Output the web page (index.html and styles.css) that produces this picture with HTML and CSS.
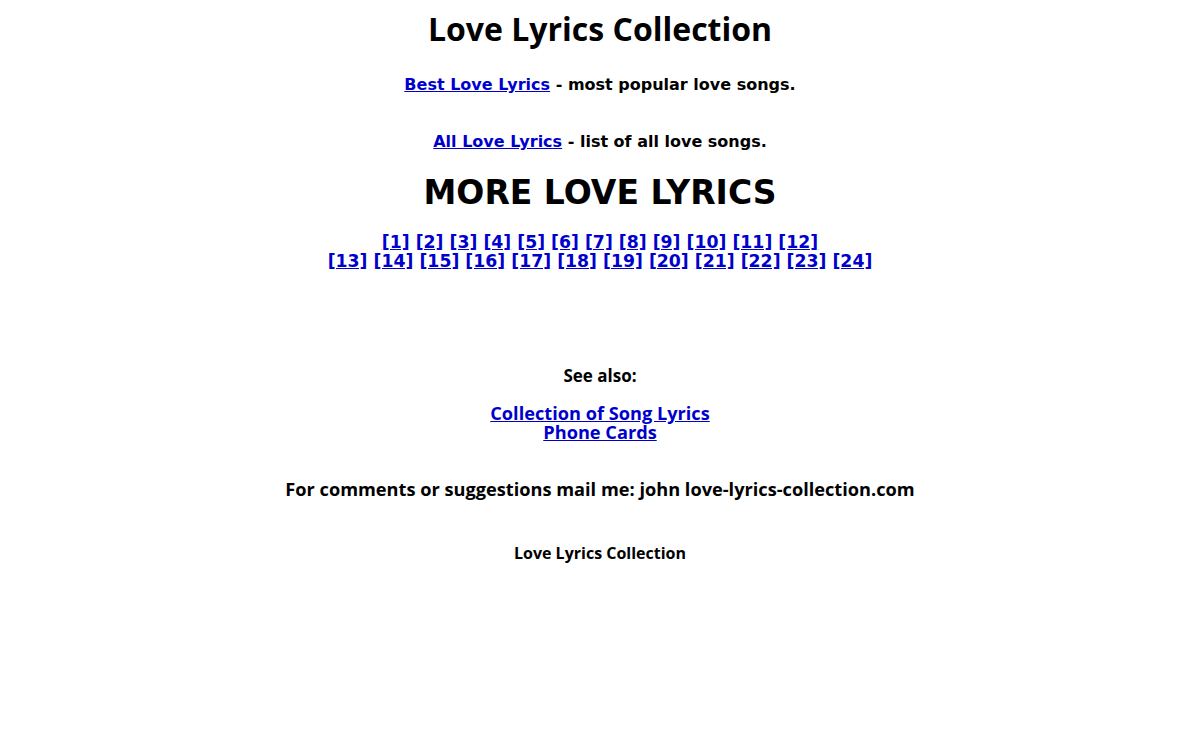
FILE: index.html
```html
<!DOCTYPE html>
<html>
<head>
<meta charset="utf-8">
<title>Love Lyrics Collection</title>
<link rel="stylesheet" href="styles.css">
</head>
<body>
<div class="page">
  <h1 class="title">Love Lyrics Collection</h1>
  <p class="intro"><a href="#">Best Love Lyrics</a> - most popular love songs.</p>
  <p class="intro second"><a href="#">All Love Lyrics</a> - list of all love songs.</p>
  <h2 class="more">MORE LOVE LYRICS</h2>
  <div class="pages">
    <a href="#">[1]</a> <a href="#">[2]</a> <a href="#">[3]</a> <a href="#">[4]</a> <a href="#">[5]</a> <a href="#">[6]</a> <a href="#">[7]</a> <a href="#">[8]</a> <a href="#">[9]</a> <a href="#">[10]</a> <a href="#">[11]</a> <a href="#">[12]</a><br>
    <a href="#">[13]</a> <a href="#">[14]</a> <a href="#">[15]</a> <a href="#">[16]</a> <a href="#">[17]</a> <a href="#">[18]</a> <a href="#">[19]</a> <a href="#">[20]</a> <a href="#">[21]</a> <a href="#">[22]</a> <a href="#">[23]</a> <a href="#">[24]</a>
  </div>
  <p class="see">See also:</p>
  <div class="also">
    <a href="#">Collection of Song Lyrics</a><br>
    <a href="#">Phone Cards</a>
  </div>
  <p class="mail">For comments or suggestions mail me: john love-lyrics-collection.com</p>
  <p class="footer">Love Lyrics Collection</p>
</div>
</body>
</html>
```
FILE: styles.css
```css
body {
  margin: 0;
  background: #ffffff;
  color: #000000;
}
.page {
  text-align: center;
  padding-top: 8px;
}
a {
  color: #0000cc;
  text-decoration: underline;
}
.title {
  font-family: "Open Sans", sans-serif;
  font-weight: bold;
  font-size: 32px;
  margin: 0;
  line-height: 42px;
}
.intro {
  font-family: "DejaVu Sans", Verdana, sans-serif;
  font-weight: bold;
  font-size: 16px;
  margin: 25px 0 0 0;
  line-height: 20px;
}
.intro.second {
  margin-top: 37px;
}
.more {
  font-family: "DejaVu Sans", Verdana, sans-serif;
  font-weight: bold;
  font-size: 33px;
  margin: 21px 0 0 0;
  line-height: 40px;
}
.pages {
  font-family: "DejaVu Sans", Verdana, sans-serif;
  font-weight: bold;
  font-size: 17.3px;
  line-height: 19px;
  margin-top: 20px;
}
.see {
  font-family: "Open Sans", sans-serif;
  font-weight: bold;
  font-size: 17px;
  margin: 94px 0 0 0;
  line-height: 22px;
}
.also {
  font-family: "Open Sans", sans-serif;
  font-weight: bold;
  font-size: 18.2px;
  line-height: 19px;
  margin-top: 17px;
}
.mail {
  font-family: "Open Sans", sans-serif;
  font-weight: bold;
  font-size: 18.2px;
  line-height: 22px;
  margin: 36px 0 0 0;
}
.footer {
  font-family: "Open Sans", sans-serif;
  font-weight: bold;
  font-size: 16px;
  line-height: 22px;
  margin: 42px 0 0 0;
}
```
